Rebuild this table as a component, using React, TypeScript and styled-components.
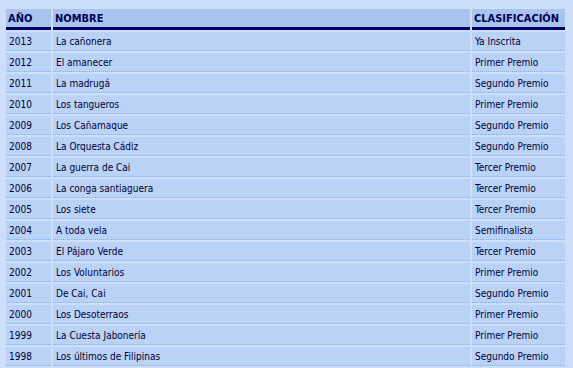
import styled, { createGlobalStyle } from "styled-components";

interface Entry {
  year: number;
  name: string;
  result: string;
}

const entries: Entry[] = [
  { year: 2013, name: "La cañonera", result: "Ya Inscrita" },
  { year: 2012, name: "El amanecer", result: "Primer Premio" },
  { year: 2011, name: "La madrugá", result: "Segundo Premio" },
  { year: 2010, name: "Los tangueros", result: "Primer Premio" },
  { year: 2009, name: "Los Cañamaque", result: "Segundo Premio" },
  { year: 2008, name: "La Orquesta Cádiz", result: "Segundo Premio" },
  { year: 2007, name: "La guerra de Cai", result: "Tercer Premio" },
  { year: 2006, name: "La conga santiaguera", result: "Tercer Premio" },
  { year: 2005, name: "Los siete", result: "Tercer Premio" },
  { year: 2004, name: "A toda vela", result: "Semifinalista" },
  { year: 2003, name: "El Pájaro Verde", result: "Tercer Premio" },
  { year: 2002, name: "Los Voluntarios", result: "Primer Premio" },
  { year: 2001, name: "De Cai, Cai", result: "Segundo Premio" },
  { year: 2000, name: "Los Desoterraos", result: "Primer Premio" },
  { year: 1999, name: "La Cuesta Jabonería", result: "Primer Premio" },
  { year: 1998, name: "Los últimos de Filipinas", result: "Segundo Premio" },
];

const App = () => {
  return (
    <>
      <GlobalStyle />
      <Page>
        <HistoryTable>
          <colgroup>
            <col style={{ width: 45 }} />
            <col />
            <col style={{ width: 93 }} />
          </colgroup>
          <thead>
            <tr>
              <HeadCell>Año</HeadCell>
              <HeadCell>Nombre</HeadCell>
              <HeadCell>Clasificación</HeadCell>
            </tr>
          </thead>
          <tbody>
            {entries.map((entry) => (
              <tr key={entry.year}>
                <Cell>{entry.year}</Cell>
                <Cell>{entry.name}</Cell>
                <Cell>{entry.result}</Cell>
              </tr>
            ))}
          </tbody>
        </HistoryTable>
      </Page>
    </>
  );
};

export default App;

const GlobalStyle = createGlobalStyle`
  html, body {
    margin: 0;
    background: #cddff8;
  }
`;

const Page = styled.div`
  width: 573px;
  height: 368px;
  padding: 7px 0 0 4px;
  box-sizing: border-box;
  overflow: hidden;
  background: #cddff8;
`;

const HistoryTable = styled.table`
  width: 563px;
  table-layout: fixed;
  border-collapse: separate;
  border-spacing: 2px;
  font-family: "DejaVu Sans Condensed", "DejaVu Sans", sans-serif;
  font-stretch: condensed;
`;

const HeadCell = styled.th`
  height: 17px;
  padding: 1px 0 0 2px;
  background: #a9c4ec;
  border-bottom: 3px solid #000066;
  color: #000055;
  font-size: 11px;
  line-height: 13px;
  font-weight: bold;
  text-align: left;
  text-transform: uppercase;
  vertical-align: middle;
`;

const Cell = styled.td`
  height: 18px;
  padding: 0 0 0 3px;
  background: #bad2f6;
  border-bottom: 1px dotted #8eaee0;
  color: #000033;
  font-size: 10px;
  white-space: nowrap;
  vertical-align: middle;
`;
